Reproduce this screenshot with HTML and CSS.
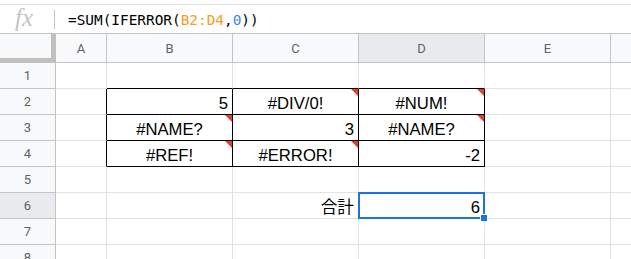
FILE: index.html
```html
<!DOCTYPE html>
<html lang="ja">
<head>
    <meta charset="UTF-8">
    <title>Sheet</title>
    <link rel="stylesheet" href="styles.css">
</head>
<body>
    <div class="formula-bar">
        <span class="fx">fx</span>
        <span class="sep"></span>
        <span class="formula">=SUM(IFERROR(<span class="ref">B2:D4</span>,<span class="num">0</span>))</span>
    </div>

    <div class="sheet">
        <!-- column headers -->
        <div class="corner"></div>
        <div class="hd">A</div>
        <div class="hd">B</div>
        <div class="hd">C</div>
        <div class="hd active">D</div>
        <div class="hd">E</div>
        <div class="hd last"></div>

        <!-- row 1 -->
        <div class="rh">1</div>
        <div class="c"></div>
        <div class="c bt"></div>
        <div class="c bt"></div>
        <div class="c bt"></div>
        <div class="c"></div>
        <div class="c last"></div>

        <!-- row 2 -->
        <div class="rh">2</div>
        <div class="c br"></div>
        <div class="c tb r">5</div>
        <div class="c tb ctr err">#DIV/0!</div>
        <div class="c tb ctr err">#NUM!</div>
        <div class="c"></div>
        <div class="c last"></div>

        <!-- row 3 -->
        <div class="rh">3</div>
        <div class="c br"></div>
        <div class="c tb ctr err">#NAME?</div>
        <div class="c tb r">3</div>
        <div class="c tb ctr err">#NAME?</div>
        <div class="c"></div>
        <div class="c last"></div>

        <!-- row 4 -->
        <div class="rh">4</div>
        <div class="c br"></div>
        <div class="c tb ctr err">#REF!</div>
        <div class="c tb ctr err">#ERROR!</div>
        <div class="c tb r">-2</div>
        <div class="c"></div>
        <div class="c last"></div>

        <!-- row 5 -->
        <div class="rh">5</div>
        <div class="c"></div>
        <div class="c"></div>
        <div class="c"></div>
        <div class="c"></div>
        <div class="c"></div>
        <div class="c last"></div>

        <!-- row 6 -->
        <div class="rh active">6</div>
        <div class="c"></div>
        <div class="c"></div>
        <div class="c r">合計</div>
        <div class="c r sel">6</div>
        <div class="c"></div>
        <div class="c last"></div>

        <!-- row 7 -->
        <div class="rh">7</div>
        <div class="c"></div>
        <div class="c"></div>
        <div class="c"></div>
        <div class="c"></div>
        <div class="c"></div>
        <div class="c last"></div>

        <!-- row 8 -->
        <div class="rh">8</div>
        <div class="c"></div>
        <div class="c"></div>
        <div class="c"></div>
        <div class="c"></div>
        <div class="c"></div>
        <div class="c last"></div>
    </div>
</body>
</html>
```

FILE: styles.css
```css
body {
    margin: 0;
    padding: 0;
    background-color: #ffffff;
    font-family: "Liberation Sans", "Noto Sans CJK JP", sans-serif;
    color: #000;
    overflow: hidden;
}

.formula-bar {
    margin-top: 4px;
    height: 29px;
    border-top: 1px solid #e1e1e1;
    display: flex;
    align-items: center;
    box-sizing: border-box;
}

.fx {
    width: 54px;
    padding-left: 15px;
    box-sizing: border-box;
    font-family: "Liberation Serif", serif;
    font-style: italic;
    font-size: 25px;
    color: #c4c4c4;
    line-height: 28px;
    margin-top: -3px;
}

.sep {
    width: 1px;
    height: 19px;
    background-color: #c4c4c4;
}

.formula {
    margin-left: 13px;
    font-family: "DejaVu Sans Mono", monospace;
    font-size: 14.4px;
    color: #000;
    padding-top: 1px;
}

.formula .ref {
    color: #f4a024;
}

.formula .num {
    color: #3d7ff2;
}

.sheet {
    display: grid;
    grid-template-columns: 56px 51px 126px 126px 126px 126px 1fr;
    grid-template-rows: 29px repeat(8, 26px);
    border-top: 1px solid #c4c4c4;
}

.sheet > div {
    box-sizing: border-box;
    white-space: nowrap;
    overflow: hidden;
}

/* headers */
.corner {
    background-color: #f8f9fa;
    border-right: 5px solid #c0c0c0;
    border-bottom: 5px solid #c0c0c0;
}

.hd,
.rh {
    background-color: #f8f9fa;
    border-right: 1px solid #c4c4c4;
    border-bottom: 1px solid #c4c4c4;
    display: flex;
    align-items: center;
    justify-content: center;
    font-family: Roboto, sans-serif;
    font-size: 13px;
    color: #5f6368;
}

.hd.last {
    border-right: none;
}

.hd.active,
.rh.active {
    background-color: #e8eaed;
}

/* cells */
.c {
    position: relative;
    border-right: 1px solid #e2e2e3;
    border-bottom: 1px solid #e2e2e3;
    display: flex;
    align-items: flex-end;
    padding: 0 4px 1px 4px;
    font-size: 16.67px;
    line-height: 19px;
    overflow: visible !important;
}

.c.last {
    border-right: none;
}

.c.r {
    justify-content: flex-end;
}

.c.ctr {
    justify-content: center;
}

/* table borders */
.c.bt {
    border-bottom-color: #000;
}

.c.br {
    border-right-color: #000;
}

.c.tb {
    border-right-color: #000;
    border-bottom-color: #000;
}

/* error marker */
.c.err::after {
    content: "";
    position: absolute;
    top: 0;
    right: 0;
    border-top: 7px solid #d9442d;
    border-left: 7px solid transparent;
}

/* selected cell */
.c.sel::before {
    content: "";
    position: absolute;
    top: -1px;
    left: -1px;
    right: -1px;
    bottom: -1px;
    border: 2px solid #1a73e8;
}

.c.sel::after {
    content: "";
    position: absolute;
    right: -4px;
    bottom: -4px;
    width: 6px;
    height: 6px;
    background-color: #1a73e8;
    border: 1px solid #ffffff;
    z-index: 2;
}
```
